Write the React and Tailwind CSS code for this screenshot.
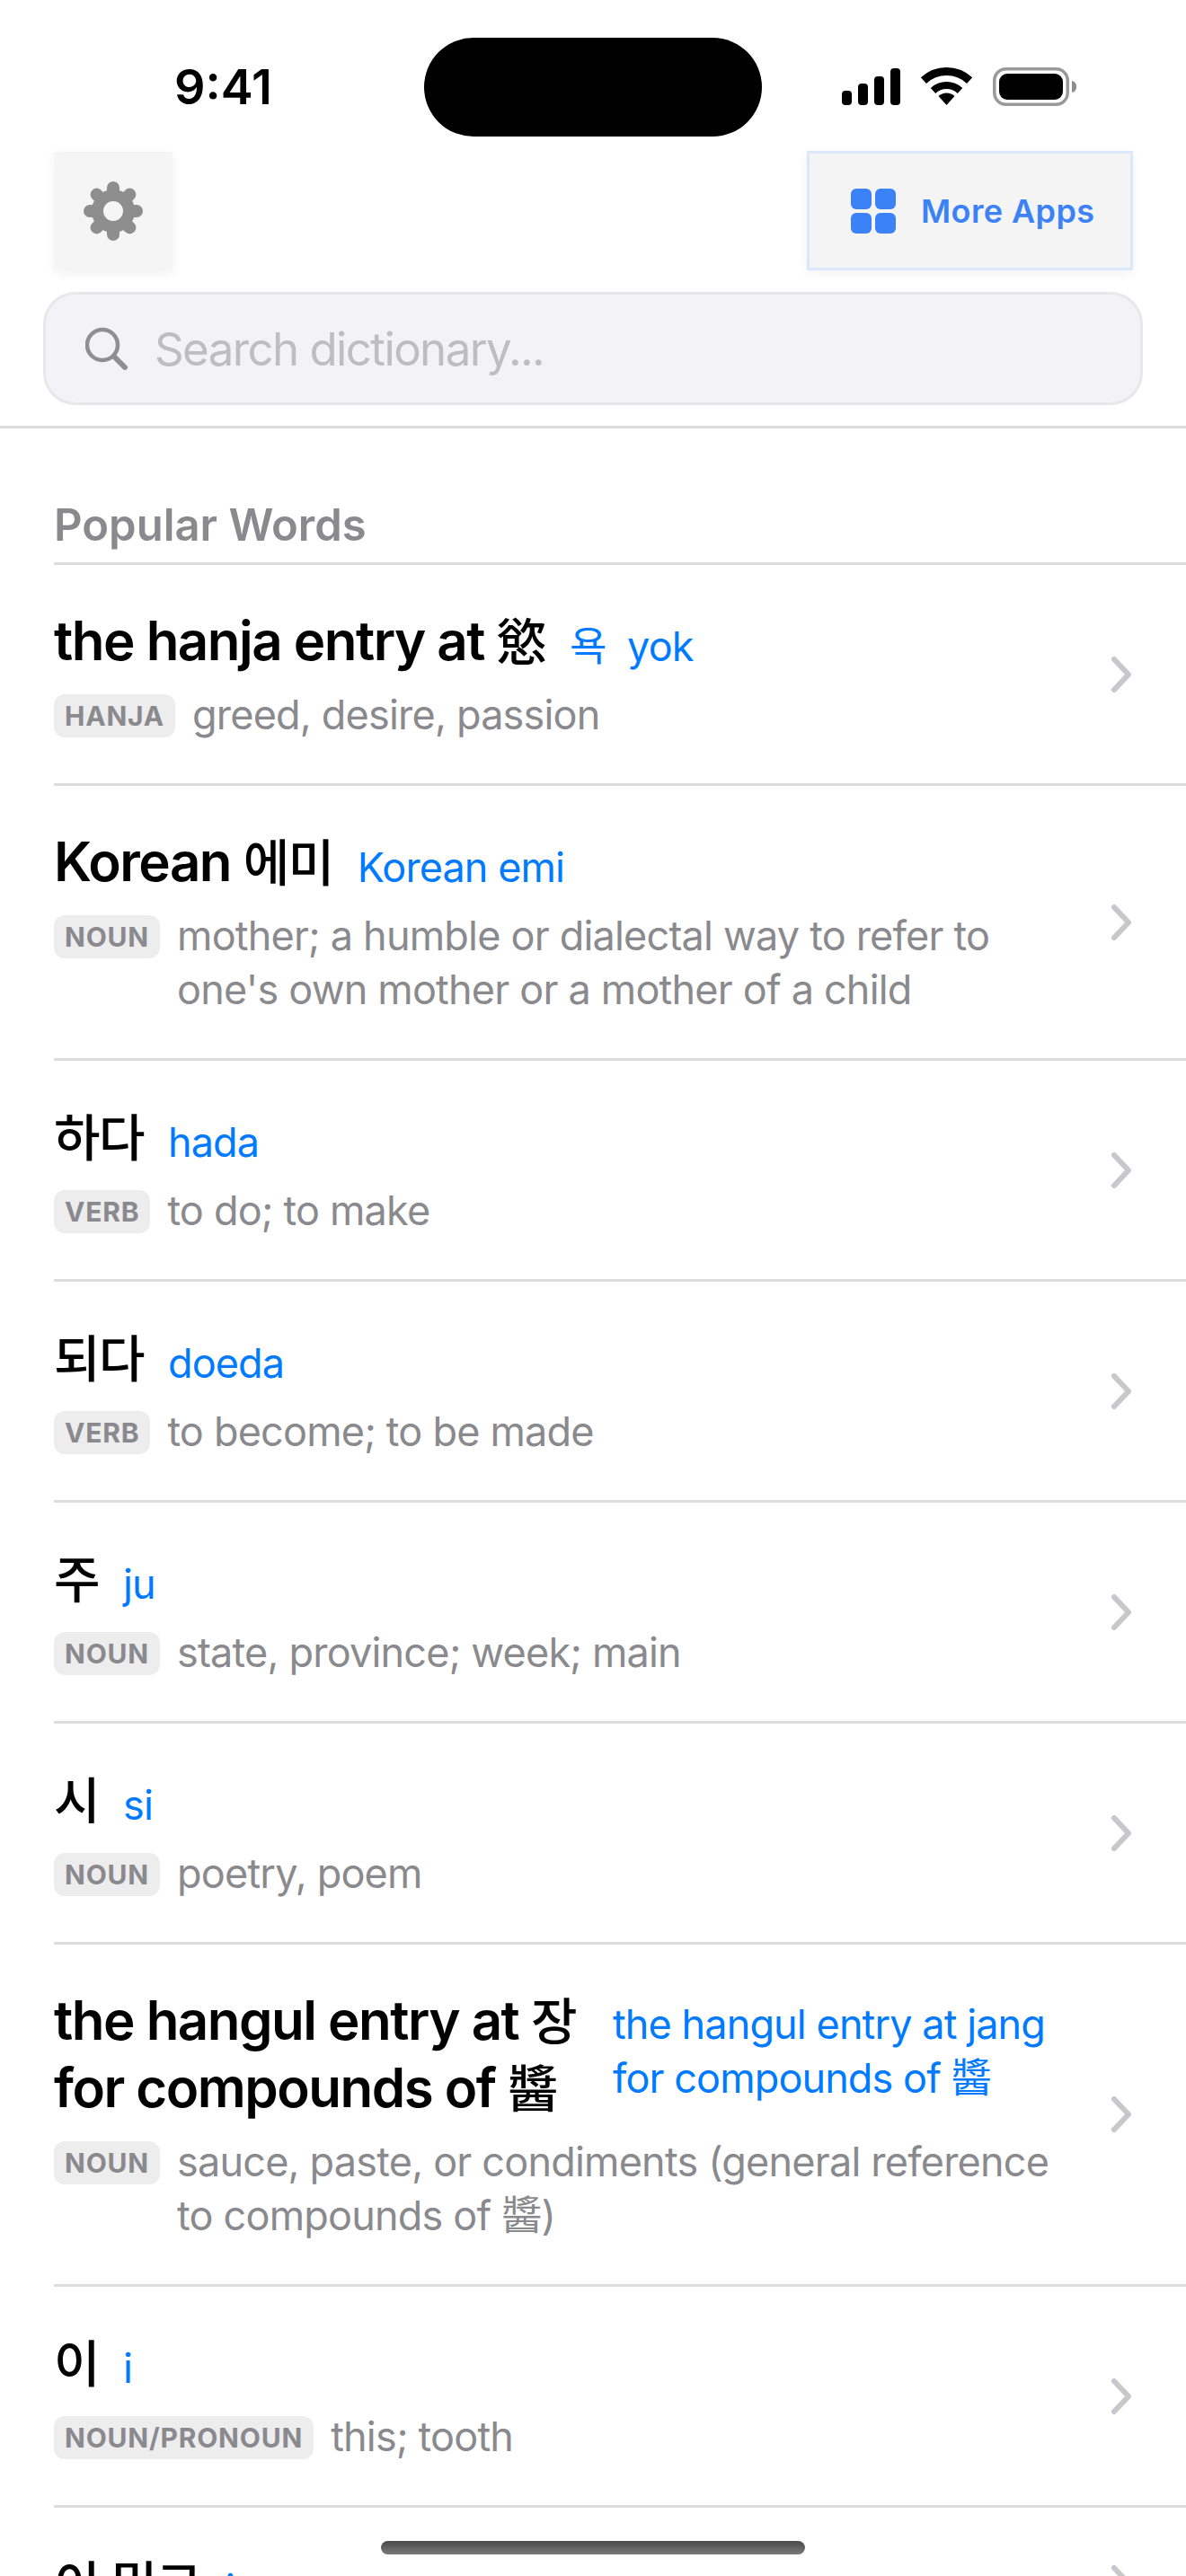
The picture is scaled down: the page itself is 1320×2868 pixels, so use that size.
const SANS = 'font-["Inter","Noto_Sans_CJK_KR",sans-serif]';

const words = [
  { title: 'the hanja entry at 慾', roman: '욕  yok', pos: 'HANJA', def: 'greed, desire, passion' },
  { title: 'Korean 에미', roman: 'Korean emi', pos: 'NOUN', def: "mother; a humble or dialectal way to refer to one's own mother or a mother of a child" },
  { title: '하다', roman: 'hada', pos: 'VERB', def: 'to do; to make' },
  { title: '되다', roman: 'doeda', pos: 'VERB', def: 'to become; to be made' },
  { title: '주', roman: 'ju', pos: 'NOUN', def: 'state, province; week; main' },
  { title: '시', roman: 'si', pos: 'NOUN', def: 'poetry, poem' },
  { title: 'the hangul entry at 장\nfor compounds of 醬', roman: 'the hangul entry at jang\nfor compounds of 醬', pos: 'NOUN', def: 'sauce, paste, or condiments (general reference to compounds of 醬)', split: true },
  { title: '이', roman: 'i', pos: 'NOUN/PRONOUN', def: 'this; tooth' },
  { title: '이 밀그', roman: 'i', pos: 'NOUN', def: '' },
];

export default function App() {
  return (
    <div className={`w-[1320px] h-[2868px] overflow-hidden bg-white relative ${SANS}`}>
      <StatusBar />

      {/* header */}
      <div className="border-b-[3px] border-[#dcdcde] pb-[23px]">
        <div className="flex justify-between items-center pl-[60px] pr-[59px] h-[133px]">
          <button className="w-[132px] h-[132px] flex items-center justify-center bg-[#f5f5f5] shadow-[0_3px_12px_rgba(0,0,0,0.06)]">
            <GearIcon />
          </button>
          <button className="w-[363px] h-[133px] flex items-center pl-[46px] gap-[28px] bg-[#f4f4f5] border-[3px] border-[#dbe7fb] shadow-[0_3px_12px_rgba(0,0,0,0.06)]">
            <GridIcon />
            <span className="text-[36px] font-semibold tracking-[0.4px] text-[#3b82f6]">More Apps</span>
          </button>
        </div>
        <div className="mx-[48px] mt-[24px] h-[126px] rounded-[36px] bg-[#f2f2f7] border-[3px] border-[#e8e8ec] flex items-center pl-[44px]">
          <SearchIcon />
          <span className="ml-[29px] mt-[2px] text-[51px] tracking-[-1.6px] text-[#bdbdc2]">Search dictionary...</span>
        </div>
      </div>

      <div className="pl-[60px]">
        <h2 className="pt-[81px] pb-[14px] text-[49px] leading-[54px] font-semibold text-[#8a8a8e] border-b-[3px] border-[#dcdcde]">Popular Words</h2>
        {words.map((w, i) => <WordRow key={i} word={w} />)}
      </div>

      {/* home indicator */}
      <div className="absolute left-[424px] top-[2829px] w-[472px] h-[15px] rounded-full bg-gradient-to-b from-[#4a4a4a] to-[#7a7a7a]" />
    </div>
  );
}

function StatusBar() {
  return (
    <div className="h-[168px] relative">
      <span className="absolute left-[194px] top-[64px] text-[54px] leading-[66px] font-semibold text-black">9:41</span>
      <div className="absolute left-[472px] top-[42px] w-[376px] h-[110px] rounded-[55px] bg-black" />
      <svg className="absolute left-[930px] top-[70px]" width="280" height="60" viewBox="0 0 280 60">
        <rect x="7" y="31" width="11" height="16" rx="4" fill="#000" />
        <rect x="25" y="23" width="11" height="24" rx="4" fill="#000" />
        <rect x="43" y="15" width="11" height="32" rx="4" fill="#000" />
        <rect x="61" y="6" width="11" height="41" rx="4" fill="#000" />
        <path d="M97.900 19.600 A37.500 37.500 0 0 1 149.100 19.600" fill="none" stroke="#000" stroke-width="9" />
        <path d="M108.500 31 A22 22 0 0 1 138.500 31" fill="none" stroke="#000" stroke-width="8" />
        <path d="M123.500 47 L114.500 37 A13 13 0 0 1 132.500 37 Z" fill="#000" />
        <rect x="176.750" y="6.750" width="81.500" height="39.500" rx="13" fill="none" stroke="#999" stroke-width="3.500" />
        <rect x="182" y="12" width="71" height="29" rx="9" fill="#000" />
        <path d="M263 20 Q268 21 268 26.500 Q268 32 263 33 Z" fill="#8e8e8e" />
      </svg>
    </div>
  );
}

// korean and hanja glyphs run narrower and lighter than the latin next to them
function TitleText({ text }) {
  return text.split(/([\u3131-\uD7A3\u4E00-\u9FFF]+)/).map((part, i) => {
    if (!part) return null;
    if (/[\u3131-\uD7A3]/.test(part)) return <span key={i} className="text-[56px] leading-none font-medium">{part}</span>;
    if (/[\u4E00-\u9FFF]/.test(part)) return <span key={i} className="text-[54px] leading-none">{part}</span>;
    return part;
  });
}

function WordRow({ word }) {
  const { title, roman, pos, def, split } = word;
  return (
    <div className="flex items-center border-b-[3px] border-[#dcdcde] pr-[60px]">
      <div className="flex-1 min-w-0 pt-[47px] pb-[46px]">
        <div className="flex items-center gap-[27px]">
          <div className={`text-[60px] leading-[75px] font-semibold text-black tracking-[-1.5px] whitespace-pre-line ${split ? 'w-[595px]' : ''}`}>
            <TitleText text={title} />
          </div>
          <div className={`text-[45px] leading-[60px] text-[#007aff] tracking-[-0.9px] whitespace-pre-wrap ${split ? '-mt-[6px]' : 'mt-[12px]'}`}>{roman}</div>
        </div>
        {def && (
          <div className="flex items-start gap-[19px] mt-[15px]">
            <span className="shrink-0 mt-[7px] h-[48px] px-[12px] rounded-[12px] bg-[#ededee] text-[#8a8a8e] text-[30px] leading-[48px] font-bold tracking-[0.8px]">{pos}</span>
            <p className="text-[45px] leading-[60px] text-[#8a8a8e] tracking-[-0.8px] pr-[52px]">{def}</p>
          </div>
        )}
      </div>
      <Chevron />
    </div>
  );
}

function Chevron() {
  return (
    <svg className="shrink-0" width="24" height="40" viewBox="0 0 24 40" fill="none" stroke="#c7c7cc" stroke-width="6" stroke-linecap="round" stroke-linejoin="round">
      <path d="M4 3 L20 20 L4 37" />
    </svg>
  );
}

function GearIcon() {
  const angles = [0, 45, 90, 135, 180, 225, 270, 315];
  return (
    <svg width="68" height="68" viewBox="-34 -34 68 68" fill="none" stroke="#8e8e8e">
      <circle r="17.500" stroke-width="13" />
      {angles.map((a) => (
        <line key={a} x1="0" y1="-21" x2="0" y2="-26" stroke-width="14" stroke-linecap="round" transform={`rotate(${a})`} />
      ))}
    </svg>
  );
}

function GridIcon() {
  return (
    <svg width="50" height="50" viewBox="0 0 50 50" fill="#3b82f6">
      <rect x="0" y="0" width="23" height="23" rx="6" />
      <rect x="27" y="0" width="23" height="23" rx="6" />
      <rect x="0" y="27" width="23" height="23" rx="6" />
      <rect x="27" y="27" width="23" height="23" rx="6" />
    </svg>
  );
}

function SearchIcon() {
  return (
    <svg width="48" height="48" viewBox="0 0 48 48" fill="none" stroke="#8e8e93" stroke-width="4.500" stroke-linecap="round">
      <circle cx="19" cy="20" r="17" />
      <path d="M32 33 L44 45" stroke-width="6" />
    </svg>
  );
}
